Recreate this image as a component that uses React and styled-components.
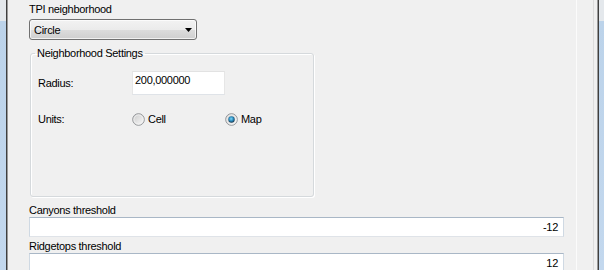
import React from "react";
import styled, { createGlobalStyle } from "styled-components";

const GlobalStyle = createGlobalStyle`
  html, body {
    margin: 0;
    padding: 0;
    background: #f0f0f0;
  }
  body {
    font-family: "Liberation Sans", Arial, sans-serif;
    font-size: 11px;
    letter-spacing: -0.3px;
    color: #000;
  }
`;

const Window = styled.div`
  display: flex;
  width: 604px;
  height: 270px;
  overflow: hidden;
  background: #f0f0f0;
`;

const Frame = styled.div`
  width: 6px;
  flex: none;
  background: linear-gradient(to bottom, #e4e8ec 0, #e4e8ec 21px, #bcd3ea 21px, #c3d8ee 100%);
  ${(p) =>
    p.$side === "left"
      ? "border-right: 1px solid #3f3f3f; box-shadow: 1px 0 0 #9a9a9a; margin-right: 1px;"
      : "border-left: 1px solid #3f3f3f; box-shadow: -1px 0 0 #9a9a9a; margin-left: 1px;"}
`;

const Content = styled.div`
  flex: 1;
  display: flex;
  flex-direction: column;
  align-items: flex-start;
  padding: 0 12px 0 21px;
  border-right: 1px solid #fbfbfb;

  & > * {
    flex-shrink: 0;
  }
`;

const Gutter = styled.div`
  width: 16px;
  flex: none;
  border-right: 1px solid #dcdcdc;
  margin-right: 3px;
`;

const Label = styled.div`
  line-height: 13px;
  height: 13px;
  margin-top: ${(p) => p.$top || 0}px;
  white-space: nowrap;
`;

const Combo = styled.div`
  box-sizing: border-box;
  width: 168px;
  height: 21px;
  margin-top: 3px;
  display: flex;
  align-items: center;
  justify-content: space-between;
  padding: 0 4px;
  border: 1px solid #707070;
  border-radius: 3px;
  background: linear-gradient(to bottom, #f2f2f2 0%, #ebebeb 50%, #dddddd 50%, #cfcfcf 100%);
  box-shadow: inset 0 0 0 1px rgba(255, 255, 255, 0.7);
`;

const Group = styled.fieldset`
  box-sizing: border-box;
  width: 284px;
  min-width: 0;
  height: 150px;
  margin: 7px 0 0 1px;
  padding: 11px 7px 0 7px;
  border: 1px solid #d5d9dc;
  border-radius: 3px;
  box-shadow: inset 1px 1px 0 #fff, 1px 1px 0 #fff;
`;

const Legend = styled.legend`
  padding: 0 2px;
  margin-left: -3px;
  line-height: 13px;
`;

const Row = styled.div`
  display: flex;
  align-items: center;
  height: 24px;
  margin-top: ${(p) => p.$top || 0}px;
`;

const RowLabel = styled.span`
  width: 94px;
  flex: none;
`;

const TextBox = styled.div`
  box-sizing: border-box;
  flex: none;
  width: ${(p) => (p.$full ? "535px" : "93px")};
  height: ${(p) => (p.$full ? "20px" : "24px")};
  display: flex;
  align-items: ${(p) => (p.$full ? "center" : "flex-start")};
  justify-content: ${(p) => (p.$full ? "flex-end" : "flex-start")};
  padding: ${(p) => (p.$full ? "0 5px 0 3px" : "2px 3px 0 2px")};
  line-height: 13px;
  background: #fff;
  border: 1px solid #dfe3e8;
  border-top-color: ${(p) => (p.$full ? "#a9b7c6" : "#e2e2e2")};
  border-left-color: ${(p) => (p.$full ? "#cfd9e3" : "#e6e6e6")};
  border-right-color: ${(p) => (p.$full ? "#cfd9e3" : "#e6e6e6")};
`;

const Radio = styled.label`
  display: flex;
  align-items: center;
  gap: 3px;
  flex: none;
  width: ${(p) => (p.$w ? `${p.$w}px` : "auto")};
`;

function RadioMark({ checked }) {
  return (
    <svg width="13" height="13" viewBox="0 0 13 13">
      <defs>
        <linearGradient id="rbg" x1="0" y1="0" x2="1" y2="1">
          <stop offset="0" stopColor="#c9c9c9" />
          <stop offset="1" stopColor="#fbfbfb" />
        </linearGradient>
        <radialGradient id="rdot" cx="0.45" cy="0.4" r="0.6">
          <stop offset="0" stopColor="#7fd8f8" />
          <stop offset="0.55" stopColor="#2a8bbf" />
          <stop offset="1" stopColor="#17364c" />
        </radialGradient>
      </defs>
      <circle cx="6.5" cy="6.5" r="5.8" fill="url(#rbg)" stroke="#909396" strokeWidth="1" />
      <circle cx="6.5" cy="6.5" r="4.6" fill="none" stroke="#f4f4f4" strokeWidth="0.8" />
      {checked && <circle cx="6.5" cy="6.5" r="3.2" fill="url(#rdot)" />}
    </svg>
  );
}

export default function App() {
  return (
    <>
      <GlobalStyle />
      <Window>
        <Frame $side="left" />
        <Content>
          <Label $top={3}>TPI neighborhood</Label>
          <Combo>
            <span>Circle</span>
            <svg width="7" height="4" viewBox="0 0 7 4">
              <path d="M0 0H7L3.5 4Z" fill="#000" />
            </svg>
          </Combo>
          <Group>
            <Legend>Neighborhood Settings</Legend>
            <Row>
              <RowLabel>Radius:</RowLabel>
              <TextBox>200,000000</TextBox>
            </Row>
            <Row $top={12}>
              <RowLabel>Units:</RowLabel>
              <Radio $w={93}>
                <RadioMark />
                Cell
              </Radio>
              <Radio>
                <RadioMark checked />
                Map
              </Radio>
            </Row>
          </Group>
          <Label $top={7}>Canyons threshold</Label>
          <TextBox $full>-12</TextBox>
          <Label $top={3}>Ridgetops threshold</Label>
          <TextBox $full>12</TextBox>
        </Content>
        <Gutter />
        <Frame $side="right" />
      </Window>
    </>
  );
}
